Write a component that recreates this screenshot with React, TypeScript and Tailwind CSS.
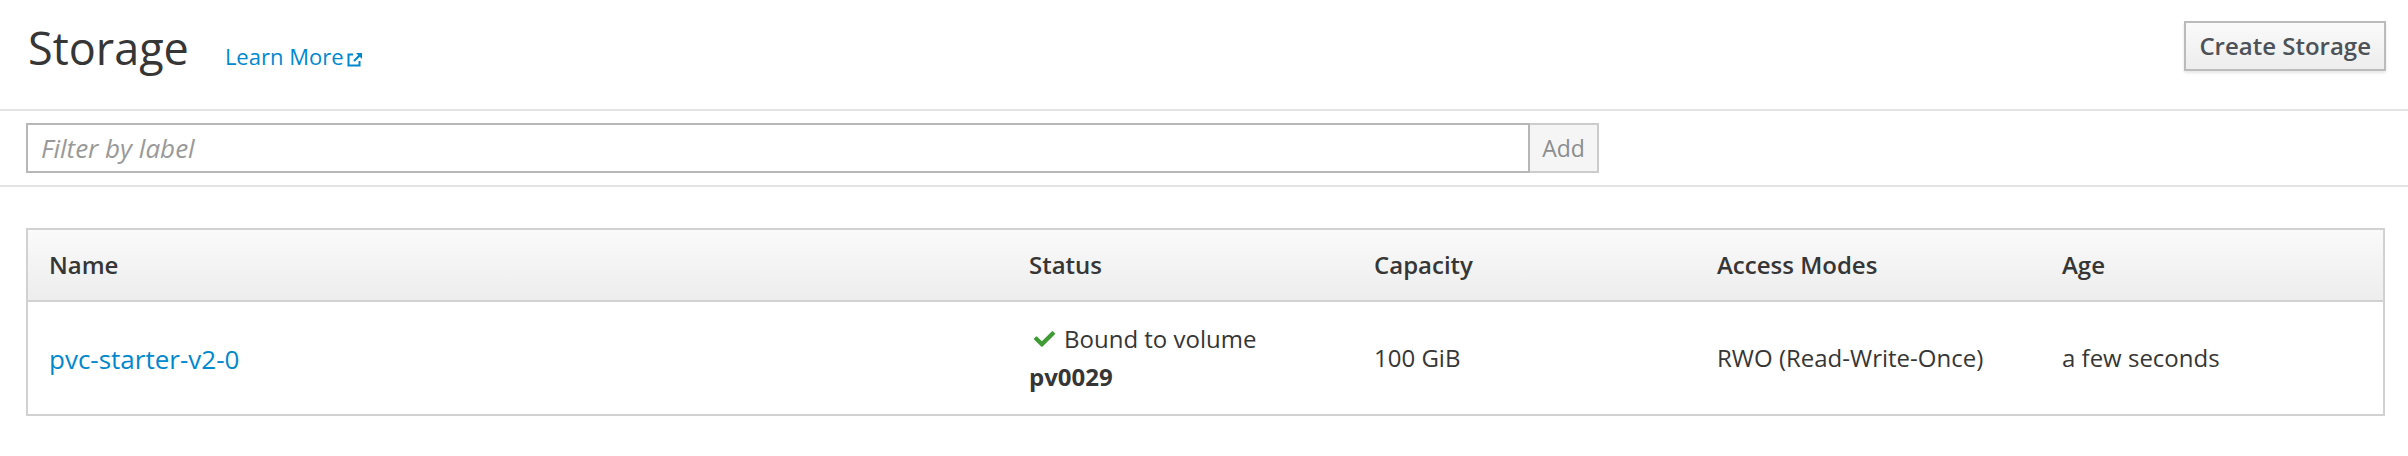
import React from "react";

function ExternalIcon() {
  return (
    <svg width="16" height="16" viewBox="0 0 16 16" className="inline-block ml-[3px] relative top-[1px]" fill="none">
      <path d="M12.5 9v4.5h-11v-11H6" stroke="#0088ce" strokeWidth="2" />
      <path d="M9 1h6v6z" fill="#0088ce" />
      <path d="M14 2L7 9" stroke="#0088ce" strokeWidth="2.2" />
    </svg>
  );
}

function CheckIcon() {
  return (
    <svg width="21" height="16" viewBox="0 65 512 382" className="inline-block">
      <path
        fill="#3f9c35"
        d="M173.898 439.404l-166.4-166.4c-9.997-9.997-9.997-26.206 0-36.204l36.203-36.204c9.997-9.998 26.207-9.998 36.204 0L192 312.69 432.095 72.596c9.997-9.997 26.207-9.997 36.204 0l36.203 36.204c9.997 9.997 9.997 26.206 0 36.204l-294.4 294.401c-9.998 9.997-26.207 9.997-36.204-.001z"
      />
    </svg>
  );
}

export default function App() {
  return (
    <div className="w-[2408px] h-[456px] bg-white text-[#363636] font-['Open_Sans',sans-serif] overflow-hidden">
      {/* Header */}
      <div className="flex justify-between items-start h-[111px] pt-[21px] pl-[28px] pr-[22px] border-b-2 border-[#e3e3e3]">
        <div className="flex items-baseline pt-[4px]">
          <h1 className="text-[45px] leading-none font-normal text-[#363636]">Storage</h1>
          <a className="ml-[36px] text-[22px] leading-none text-[#0088ce] cursor-pointer">
            Learn More
            <ExternalIcon />
          </a>
        </div>
        <button className="h-[50px] px-[13px] border-2 border-[#bbbbbb] bg-linear-to-b from-[#fafafa] to-[#ededed] shadow-[0_2px_3px_rgba(3,3,3,0.1)] text-[24px] leading-none font-semibold text-[#4d5258]">
          Create Storage
        </button>
      </div>

      {/* Filter */}
      <div className="flex pl-[26px] pt-[12px] pb-[12px] border-b-2 border-[#e3e3e3]">
        <div className="flex h-[50px]">
          <div className="w-[1504px] h-full border-2 border-[#b7b7b7] flex items-center pl-[13px]">
            <span className="text-[26px] italic text-[#999999] leading-none">Filter by label</span>
          </div>
          <div className="w-[69px] h-full border-2 border-l-0 border-[#cccccc] bg-[#f5f5f5] flex items-center justify-center">
            <span className="text-[23px] text-[#8b8d8f]">Add</span>
          </div>
        </div>
      </div>

      {/* Table */}
      <div className="ml-[26px] mr-[23px] mt-[41px] border-2 border-[#d1d1d1]">
        <div className="grid grid-cols-[980px_345px_343px_345px_1fr] h-[72px] bg-linear-to-b from-[#fafafa] to-[#ededed] border-b-2 border-[#d1d1d1] text-[24px] font-semibold text-[#363636]">
          <div className="flex items-center pl-[21px]">Name</div>
          <div className="flex items-center pl-[21px]">Status</div>
          <div className="flex items-center pl-[21px]">Capacity</div>
          <div className="flex items-center pl-[21px]">Access Modes</div>
          <div className="flex items-center pl-[21px]">Age</div>
        </div>
        <div className="grid grid-cols-[980px_345px_343px_345px_1fr] h-[112px] text-[24px] leading-[1.6]">
          <div className="flex items-center pl-[21px] pt-[4px]">
            <a className="text-[#0088ce] cursor-pointer text-[26px]">pvc-starter-v2-0</a>
          </div>
          <div className="flex flex-col justify-center pl-[21px]">
            <div className="flex items-center">
              <span className="ml-[5px] mr-[9px] flex items-center">
                <CheckIcon />
              </span>
              <span>Bound to volume</span>
            </div>
            <div className="font-bold">pv0029</div>
          </div>
          <div className="flex items-center pl-[21px]">100 GiB</div>
          <div className="flex items-center pl-[21px]">RWO (Read-Write-Once)</div>
          <div className="flex items-center pl-[21px]">a few seconds</div>
        </div>
      </div>
    </div>
  );
}
